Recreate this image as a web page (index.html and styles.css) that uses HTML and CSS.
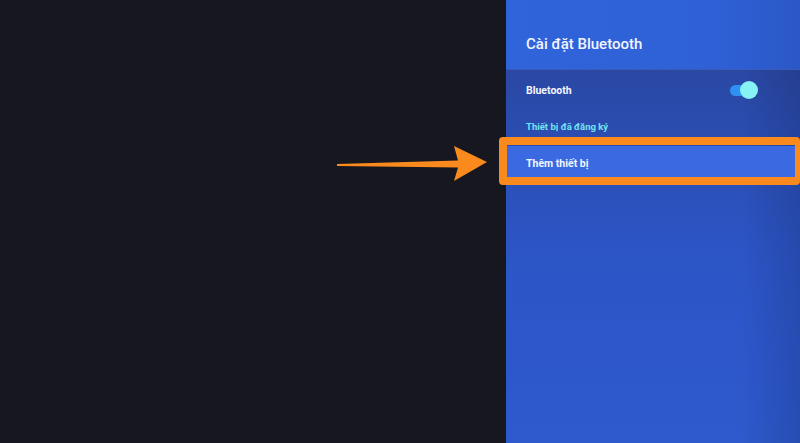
FILE: index.html
```
<!DOCTYPE html>
<html lang="vi">
<head>
<meta charset="utf-8">
<link rel="stylesheet" href="styles.css">
</head>
<body>
<div class="screen">
  <div class="dark"></div>
  <div class="panel">
    <div class="header"><h1 class="title">Cài đặt Bluetooth</h1></div>
    <div class="list">
      <div class="row row-bt">
        <span class="label">Bluetooth</span>
        <span class="toggle"><span class="knob"></span></span>
      </div>
      <div class="section">Thiết bị đã đăng ký</div>
      <div class="row row-focus"><span class="label">Thêm thiết bị</span></div>
    </div>
  </div>
  <div class="frame"></div>
  <svg class="arrow" width="160" height="40" viewBox="0 0 160 40">
    <polygon points="0,19 121,15.5 117,1 150,17 117,36 121,22.5 0,21" fill="#fb8a1e"/>
  </svg>
</div>
</body>
</html>
```
FILE: styles.css
```
html, body { margin: 0; padding: 0; }
body { width: 800px; height: 443px; overflow: hidden; background: #16161e; font-family: Roboto, "Noto Sans", sans-serif; }
.screen { position: relative; display: flex; width: 800px; height: 443px; }
.dark { width: 506px; background: #17171f; }
.panel { width: 294px; display: flex; flex-direction: column; background: #2d58cc; }
.header { height: 70px; background: linear-gradient(90deg, #3064da 0%, #2f60d6 70%, #2b58c8 100%); display: flex; align-items: flex-end; border-bottom: 1px solid #3a5cb5; box-sizing: border-box; }
.title { margin: 0 0 16px 20px; color: #f2f5ff; font-size: 15px; font-weight: 500; letter-spacing: 0; }
.list { flex: 1; background: linear-gradient(90deg, rgba(0,0,0,0) 80%, rgba(10,20,60,0.18) 100%), linear-gradient(180deg, #2a48a4 0%, #2b4fb6 25%, #2c55c6 50%, #2d58cc 80%, #2d5acc 100%); }
.row { display: flex; align-items: center; padding: 0 20px; }
.row-bt { height: 40px; justify-content: space-between; }
.label { color: #f4f6ff; font-size: 10.5px; font-weight: 700; }
.toggle { position: relative; width: 22px; height: 11px; border-radius: 6px; background: #2f8ff2; margin-right: 28px; }
.knob { position: absolute; right: -6px; top: -3.5px; width: 18px; height: 18px; border-radius: 50%; background: #86f2f4; }
.section { color: #74e2f4; font-size: 9.5px; font-weight: 700; padding: 11px 20px 0; height: 25px; box-sizing: border-box; }
.row-focus { height: 31px; margin-top: 11px; background: #3a69e2; padding-top: 3px; box-sizing: border-box; }
.frame { position: absolute; left: 499px; top: 137px; width: 288px; height: 32px; border-style: solid; border-color: #fb8a1e; border-width: 8px 5px 8px 8px; border-radius: 4px; }
.arrow { position: absolute; left: 337px; top: 145px; }
```
